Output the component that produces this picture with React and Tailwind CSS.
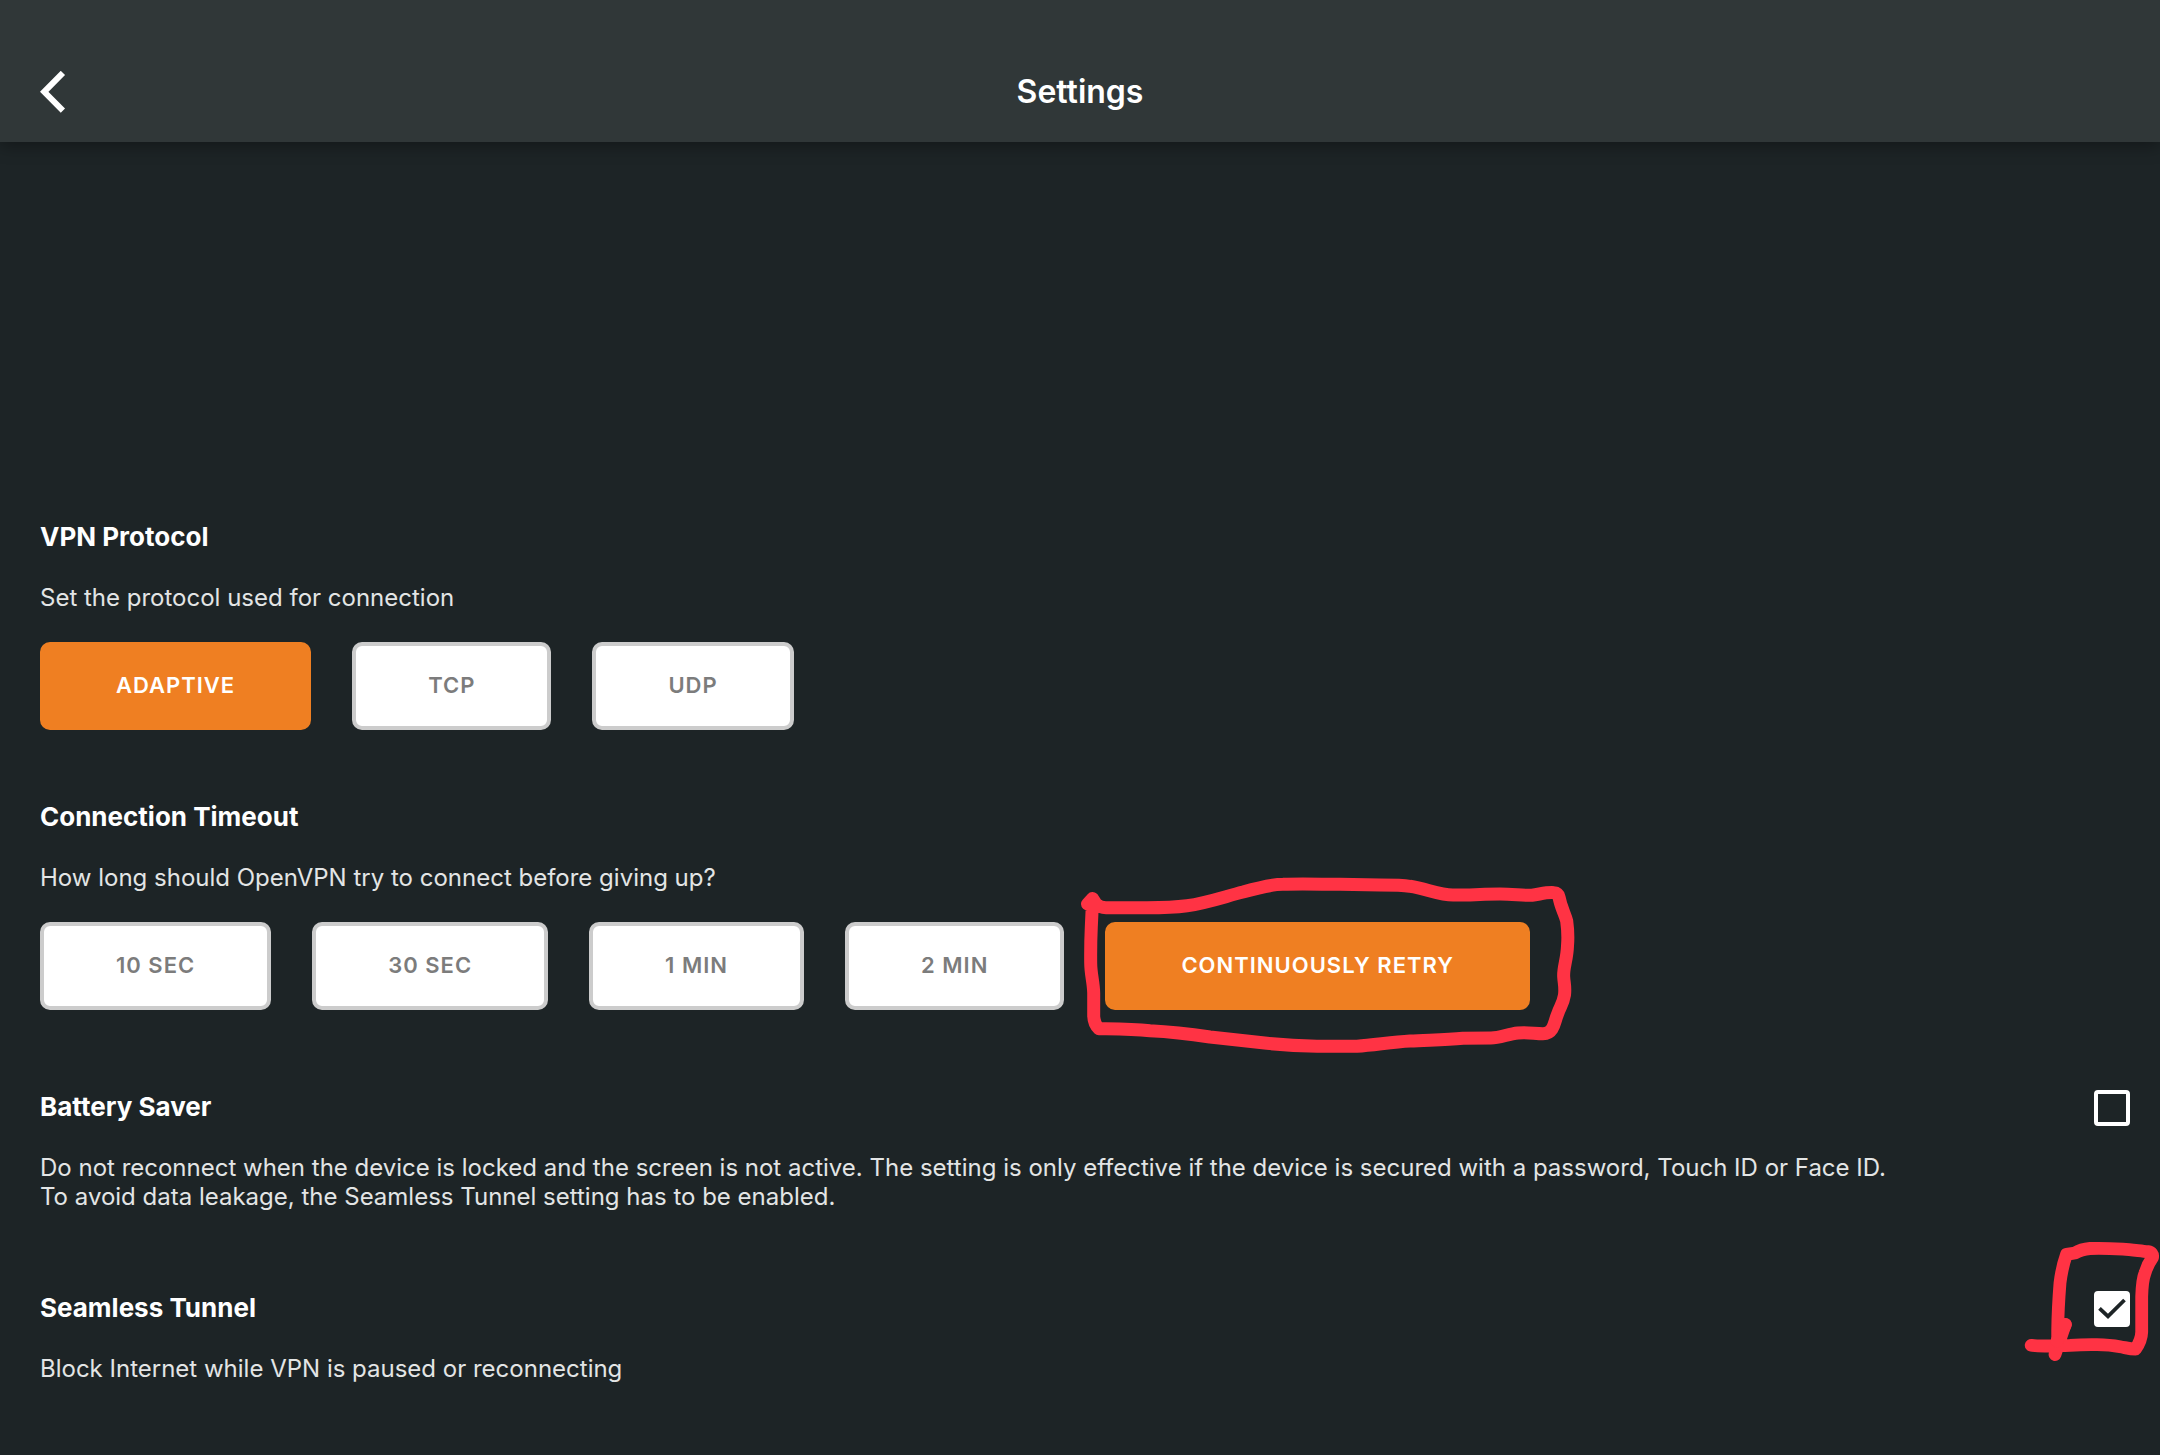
import { useState } from "react";
import clsx from "clsx";

const PROTOCOLS = ["ADAPTIVE", "TCP", "UDP"];
const TIMEOUTS = ["10 SEC", "30 SEC", "1 MIN", "2 MIN", "CONTINUOUSLY RETRY"];

function Header({ title }) {
  return (
    <header className="relative z-10 flex items-end bg-[#303738] px-10 pt-15 pb-[18px] shadow-[0_4px_16px_rgba(0,0,0,0.35)]">
      <button type="button" aria-label="Back" className="flex h-16 w-20 items-center text-white">
        <svg viewBox="0 0 26 42" className="h-[42px] w-[26px]" fill="none" stroke="currentColor" strokeWidth="6" aria-hidden="true">
          <path d="M22.9 1.9 4.2 20.8l18.7 18.9" />
        </svg>
      </button>
      <h1 className="flex-1 text-center text-[32px] leading-[64px] font-semibold text-white">{title}</h1>
      <div className="w-20" />
    </header>
  );
}

function RetryMark() {
  return (
    <svg
      viewBox="0 0 504 184"
      className="pointer-events-none absolute -top-12 -left-7 h-[184px] w-[504px]"
      fill="none"
      stroke="#ff3344"
      strokeWidth="13"
      strokeLinecap="round"
      strokeLinejoin="round"
      aria-hidden="true"
    >
      <path d="M10.5 30 15.5 24.5 19 30Q23 33.7 29 33.7H70Q95 33.7 110 31.7C130 29 148 22.5 166 18Q194 10.3 206 10.3C225 9.5 245 10.3 263 10.3L303 11Q325 11 333 12.3C349 14.5 362 21 376 21H393Q408 20 423 20C437 20 447 22 455 21.2C463 20.2 470 18 477 18.7Q481 19 482 23C484 34 488 40 489.7 47Q491.5 60 490.5 72C490 86 486 94 486.7 103C487 109 488.5 113 487.5 121C486 130 483 133 481 139C478 146 478 150 475 155Q472 159.7 466 159.7C458 159.7 450 158 441 159C431 160 423 164 414 164L386 164.3C368 166 350 166 333 167C315 168 298 171 280 172.3H240C222 172 206 171 190 169.3L133 163Q100 158 73 156.7C55 155 40 155 22 154.7Q17 150 16.7 142V119C16.5 108 13.7 100 13.7 89Q13.5 70 14.3 53L15.5 27" />
    </svg>
  );
}

// Hand-drawn outline around the enabled checkbox
function TunnelMark() {
  return (
    <svg
      viewBox="0 0 142 136"
      className="pointer-events-none absolute top-[-58px] left-[-76px] h-[136px] w-[142px] max-w-none"
      fill="none"
      stroke="#ff3344"
      strokeWidth="12.8"
      strokeLinecap="round"
      strokeLinejoin="round"
      aria-hidden="true"
    >
      <path d="M13.2 112.3C24 114 38 112.5 52 112.3Q65 111.5 79 111.7Q92 112 102 113.7C109 115 112 116 117.5 116C121 111 123.5 106 123.7 99V63.7C124 54 124.5 46 127 40C129 33 132 28 134.5 24.5Q135.5 19.5 130 18.7C122 18 113 16.6 105 16.2C94 15.5 83 15 72 15.5C66 16 61 17.5 57 20L48.5 21.3C45 31 43 42 42 50Q40 75 39.7 97V112L37 121.5 47.2 91.5 40 110" />
      <path d="M39 108 47.5 91.5" />
    </svg>
  );
}

function OptionButton({ label, selected, onClick }) {
  return (
    <button
      type="button"
      aria-pressed={selected}
      onClick={onClick}
      className={clsx(
        "h-22 rounded-[10px] border-4 px-18 pb-0.5 text-[22px] font-semibold tracking-[1px] whitespace-nowrap",
        selected
          ? "border-[#ef7f22] bg-[#ef7f22] text-white"
          : "border-[#cccccc] bg-white text-[#7c7c7c]",
      )}
    >
      {label}
    </button>
  );
}

function OptionSection({ title, description, options, value, onChange, highlighted }) {
  return (
    <section>
      <h2 className="text-[26px] leading-8 font-bold text-white">{title}</h2>
      <p className="mt-[30px] text-2xl leading-[29px] text-[#e3e5e5]">{description}</p>
      <div className="mt-[30px] flex flex-wrap gap-[41px]">
        {options.map((option) => (
          <div key={option} className="relative">
            <OptionButton label={option} selected={option === value} onClick={() => onChange(option)} />
            {option === highlighted && <RetryMark />}
          </div>
        ))}
      </div>
    </section>
  );
}

function CheckSection({ id, title, description, checked, onChange, children }) {
  return (
    <section className="flex items-start justify-between">
      <div>
        <h2 className="text-[26px] leading-8 font-bold text-white">
          <label htmlFor={id}>{title}</label>
        </h2>
        <p className="mt-[30px] text-2xl leading-[29px] whitespace-pre-line text-[#e3e5e5]">{description}</p>
      </div>
      <div className="relative -mt-px size-9 shrink-0">
        <input
          id={id}
          type="checkbox"
          checked={checked}
          onChange={(e) => onChange(e.target.checked)}
          className="peer block size-9 appearance-none rounded-sm border-4 border-white checked:bg-white"
        />
        <svg
          viewBox="0 0 36 36"
          className="pointer-events-none absolute inset-0 hidden peer-checked:block"
          fill="none"
          stroke="#1d2426"
          strokeWidth="3.8"
          aria-hidden="true"
        >
          <path d="M5.5 17.3 14 25.3 30.5 9" />
        </svg>
        {children}
      </div>
    </section>
  );
}

function App() {
  const [protocol, setProtocol] = useState("ADAPTIVE");
  const [timeout, setTimeoutOption] = useState("CONTINUOUSLY RETRY");
  const [batterySaver, setBatterySaver] = useState(false);
  const [seamlessTunnel, setSeamlessTunnel] = useState(true);

  return (
    <div className="min-h-screen overflow-hidden bg-[#1d2426] font-['Inter',sans-serif]">
      <Header title="Settings" />
      <main className="flex flex-col gap-[81px] pt-[379px] pr-[30px] pb-16 pl-10">
        <div className="flex flex-col gap-[71px]">
          <OptionSection
            title="VPN Protocol"
            description="Set the protocol used for connection"
            options={PROTOCOLS}
            value={protocol}
            onChange={setProtocol}
          />
          <OptionSection
            title="Connection Timeout"
            description="How long should OpenVPN try to connect before giving up?"
            options={TIMEOUTS}
            value={timeout}
            onChange={setTimeoutOption}
            highlighted="CONTINUOUSLY RETRY"
          />
        </div>
        <CheckSection
          id="battery-saver"
          title="Battery Saver"
          description={
            "Do not reconnect when the device is locked and the screen is not active. The setting is only effective if the device is secured with a password, Touch ID or Face ID.\nTo avoid data leakage, the Seamless Tunnel setting has to be enabled."
          }
          checked={batterySaver}
          onChange={setBatterySaver}
        />
        <CheckSection
          id="seamless-tunnel"
          title="Seamless Tunnel"
          description="Block Internet while VPN is paused or reconnecting"
          checked={seamlessTunnel}
          onChange={setSeamlessTunnel}
        >
          <TunnelMark />
        </CheckSection>
      </main>
    </div>
  );
}

export default App;
